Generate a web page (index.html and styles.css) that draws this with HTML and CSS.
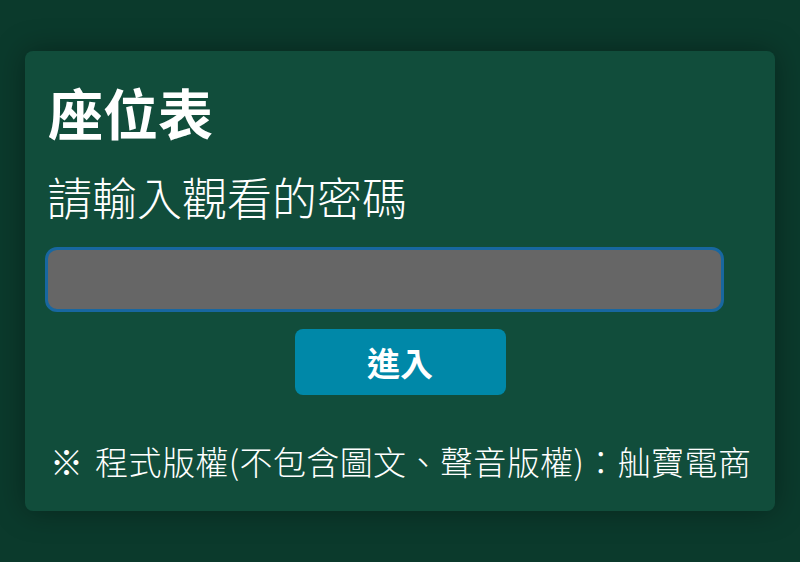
FILE: index.html
```html
<!DOCTYPE html>
<html lang="zh-Hant">
<head>
<meta charset="utf-8">
<title>座位表</title>
<link rel="stylesheet" href="styles.css">
</head>
<body>
<main class="card">
  <h1 class="title">座位表</h1>
  <p class="subtitle">請輸入觀看的密碼</p>
  <input class="password" type="password" aria-label="密碼">
  <div class="actions">
    <button class="enter" type="button">進入</button>
  </div>
  <p class="copyright">※ 程式版權(不包含圖文、聲音版權)：舢寶電商</p>
</main>
</body>
</html>
```
FILE: styles.css
```css
html, body {
  margin: 0;
  padding: 0;
}
body {
  background: #0b3a2c;
  font-family: "Noto Sans CJK TC", "Noto Sans", sans-serif;
  color: #ffffff;
  width: 800px;
  height: 562px;
  overflow: hidden;
  padding: 51px 25px 0;
  box-sizing: border-box;
}
.card {
  background: #114d3b;
  border-radius: 8px;
  box-shadow: 0 0 30px rgba(0, 0, 0, 0.35);
  padding: 28px 20px 30px;
  display: flex;
  flex-direction: column;
}
.title {
  margin: 0;
  padding-left: 3px;
  font-size: 55px;
  line-height: 64px;
  font-weight: 700;
}
.subtitle {
  margin: 26px 0 0;
  padding-left: 2px;
  font-size: 45px;
  line-height: 56px;
  font-weight: 300;
}
.password {
  margin: 22px 0 0;
  width: 679px;
  height: 65px;
  box-sizing: border-box;
  background: #666666;
  border: 3px solid #1867a0;
  border-radius: 12px;
  outline: none;
  color: #ffffff;
  font-size: 30px;
  padding: 0 16px;
}
.actions {
  display: flex;
  justify-content: center;
  margin-top: 17px;
}
.enter {
  width: 211px;
  height: 66px;
  border: none;
  border-radius: 8px;
  background: #0088a8;
  color: #ffffff;
  font-family: "Noto Sans CJK TC", "Noto Sans", sans-serif;
  font-size: 33px;
  font-weight: 700;
  line-height: 1;
  padding: 0;
}
.copyright {
  margin: 46px 0 0;
  font-size: 33px;
  line-height: 40px;
  font-weight: 300;
  padding-left: 5px;
  word-spacing: 4px;
  letter-spacing: 0.4px;
  white-space: nowrap;
}
```
